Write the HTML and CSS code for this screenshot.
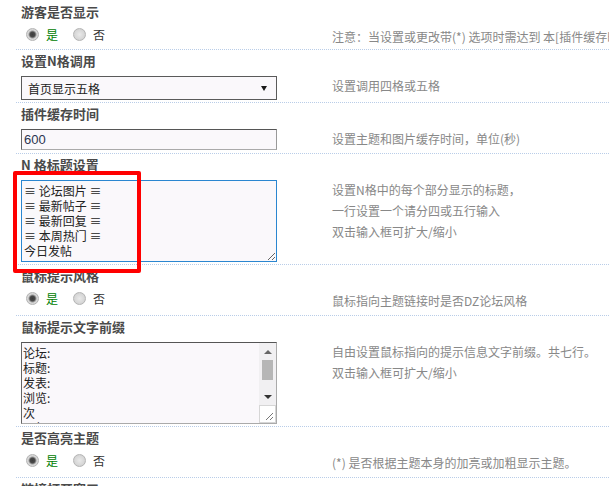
FILE: index.html
```html
<!DOCTYPE html>
<html lang="zh-CN">
<head>
    <meta charset="UTF-8">
    <title>N格设置</title>
    <link rel="stylesheet" href="styles.css">
</head>
<body>
    <div class="settings">
        <div class="item first">
            <div class="item-title">游客是否显示</div>
            <div class="item-body">
                <div class="field radios">
                    <label class="opt yes"><input type="radio" class="radio" name="guest" checked>是</label>
                    <label class="opt"><input type="radio" class="radio" name="guest">否</label>
                </div>
                <div class="tips">注意：当设置或更改带(*) 选项时需达到 本[插件缓存时间]后方可生效</div>
            </div>
        </div>
        <div class="item">
            <div class="item-title">设置N格调用</div>
            <div class="item-body">
                <div class="field">
                    <div class="select-box">
                        <select class="select">
                            <option>首页显示五格</option>
                            <option>首页显示四格</option>
                        </select>
                    </div>
                </div>
                <div class="tips">设置调用四格或五格</div>
            </div>
        </div>
        <div class="item">
            <div class="item-title">插件缓存时间</div>
            <div class="item-body">
                <div class="field">
                    <input type="text" class="text-input" value="600">
                </div>
                <div class="tips">设置主题和图片缓存时间，单位(秒)</div>
            </div>
        </div>
        <div class="item">
            <div class="item-title">N 格标题设置</div>
            <div class="item-body">
                <div class="field">
                    <textarea class="area focus">≡ 论坛图片 ≡
≡ 最新帖子 ≡
≡ 最新回复 ≡
≡ 本周热门 ≡
今日发帖</textarea>
                </div>
                <div class="tips">设置N格中的每个部分显示的标题，<br>一行设置一个请分四或五行输入<br>双击输入框可扩大/缩小</div>
            </div>
        </div>
        <div class="item">
            <div class="item-title">鼠标提示风格</div>
            <div class="item-body">
                <div class="field radios">
                    <label class="opt yes"><input type="radio" class="radio" name="tipstyle" checked>是</label>
                    <label class="opt"><input type="radio" class="radio" name="tipstyle">否</label>
                </div>
                <div class="tips">鼠标指向主题链接时是否DZ论坛风格</div>
            </div>
        </div>
        <div class="item">
            <div class="item-title">鼠标提示文字前缀</div>
            <div class="item-body">
                <div class="field">
                    <div class="area-wrap">
                        <textarea class="area plain">论坛:
标题:
发表:
浏览:
次
回复:
次</textarea>
                        <!-- classic scrollbar drawn over the textarea -->
                        <div class="scrollbar">
                            <div class="sb-btn"><span class="arrow up"></span></div>
                            <div class="sb-track"><div class="sb-thumb"></div></div>
                            <div class="sb-btn"><span class="arrow down"></span></div>
                            <div class="sb-corner">
                                <svg width="8" height="8" viewBox="0 0 8 8"><path d="M1 8 L8 1 M5 8 L8 5" stroke="#777" stroke-width="1"/></svg>
                            </div>
                        </div>
                    </div>
                </div>
                <div class="tips">自由设置鼠标指向的提示信息文字前缀。共七行。<br>双击输入框可扩大/缩小</div>
            </div>
        </div>
        <div class="item">
            <div class="item-title">是否高亮主题</div>
            <div class="item-body">
                <div class="field radios">
                    <label class="opt yes"><input type="radio" class="radio" name="hl" checked>是</label>
                    <label class="opt"><input type="radio" class="radio" name="hl">否</label>
                </div>
                <div class="tips">(*) 是否根据主题本身的加亮或加粗显示主题。</div>
            </div>
        </div>
        <div class="item">
            <div class="item-title">链接打开窗口</div>
        </div>
    </div>
    <div class="highlight"></div>
</body>
</html>
```

FILE: styles.css
```css
html, body {
    overflow: hidden;
}
body {
    margin: 0;
    background-color: #fff;
    font-family: "Noto Sans CJK SC", "Liberation Sans", sans-serif;
    font-size: 12px;
    color: #333;
}
.settings {
    padding-left: 16px;
}
.item {
    border-top: 1px dotted #b9cde8;
}
.item.first {
    border-top-color: transparent;
}
.item.first .item-body {
    padding-bottom: 0;
}
.item-title {
    height: 26px;
    line-height: 22px;
    padding-left: 5px;
    font-size: 13px;
    font-weight: bold;
    color: #4a4a4a;
    white-space: nowrap;
}
.item-body {
    display: flex;
    padding: 0 0 2px 5px;
    overflow: hidden;
}
.field {
    width: 256px;
    flex: none;
}
.tips {
    margin-left: 55px;
    margin-top: -1px;
    line-height: 21px;
    color: #888;
    white-space: nowrap;
}

/* radios */
.radios {
    display: flex;
    align-items: flex-start;
    height: 22px;
}
.opt {
    display: flex;
    align-items: center;
    height: 13px;
    margin-top: 1px;
    line-height: 13px;
    color: #333;
}
.opt.yes {
    color: #008000;
    margin-left: 5px;
    margin-right: 15px;
}
.radio {
    appearance: none;
    width: 13px;
    height: 13px;
    margin: 0 7px 0 0;
    border-radius: 50%;
    border: 1px solid #b4b4b4;
    box-sizing: border-box;
    background: radial-gradient(circle, #e9e9e9 0, #d4d4d4 70%, #c8c8c8 100%);
}
.radio:checked {
    background: radial-gradient(circle, #3c3c3c 0, #4a4a4a 2.5px, #9a9a9a 3.5px, #dadada 4.5px, #c8c8c8 100%);
}

/* select */
.select-box {
    position: relative;
    width: 256px;
    height: 24px;
}
.select-box::after {
    content: "";
    position: absolute;
    right: 10px;
    top: 10px;
    border-left: 3px solid transparent;
    border-right: 3px solid transparent;
    border-top: 5px solid #1a1a1a;
}
.select {
    appearance: none;
    width: 100%;
    height: 100%;
    margin: 0;
    padding: 0 0 0 6px;
    border: 1px solid #5a5a5a;
    border-radius: 0;
    background-color: #faf8fb;
    font-family: "Noto Sans CJK SC", sans-serif;
    font-size: 12px;
    color: #222;
    outline: none;
}

/* text input */
.text-input {
    display: block;
    width: 256px;
    height: 21px;
    margin: 0 0 1px 0;
    padding: 0 2px;
    box-sizing: border-box;
    border: 1px solid;
    border-color: #555 #999 #aaa #666;
    background-color: #faf8fb;
    font-family: "Liberation Sans", sans-serif;
    font-size: 13px;
    color: #2a3550;
    outline: none;
}

/* textareas */
.area {
    display: block;
    width: 256px;
    height: 82px;
    margin: 0;
    padding: 2px 2px;
    box-sizing: border-box;
    background-color: #faf8fb;
    font-family: "Noto Sans CJK SC", sans-serif;
    font-size: 12px;
    line-height: 15px;
    color: #222;
    overflow: hidden;
    outline: none;
}
.area.focus {
    border: 1px solid #2a86d0;
    resize: both;
}
.area.plain {
    border: 1px solid;
    border-color: #555 #aaa #aaa #666;
    padding-left: 1px;
    padding-right: 19px;
    resize: none;
}
.area-wrap {
    position: relative;
    width: 256px;
    height: 82px;
}
.scrollbar {
    position: absolute;
    top: 1px;
    right: 1px;
    bottom: 1px;
    width: 17px;
    display: flex;
    flex-direction: column;
    background-color: #f1f0f2;
}
.sb-btn {
    height: 17px;
    display: flex;
    align-items: center;
    justify-content: center;
    flex: none;
}
.arrow {
    width: 0;
    height: 0;
    border-left: 4px solid transparent;
    border-right: 4px solid transparent;
}
.arrow.up {
    border-bottom: 4px solid #666;
}
.arrow.down {
    border-top: 4px solid #333;
}
.sb-track {
    flex: 1;
    padding: 0 3px;
}
.sb-thumb {
    height: 20px;
    background-color: #b6b6b6;
}
.sb-corner {
    height: 18px;
    flex: none;
    box-sizing: border-box;
    border: 1px solid #d6d6d6;
    background-color: #fff;
    display: flex;
    align-items: flex-end;
    justify-content: flex-end;
    padding: 0 2px 2px 0;
}

/* red marker round the title box */
.highlight {
    position: absolute;
    left: 13px;
    top: 171px;
    width: 128px;
    height: 102px;
    box-sizing: border-box;
    border: 4px solid #ff0000;
    border-radius: 2px;
}
```
